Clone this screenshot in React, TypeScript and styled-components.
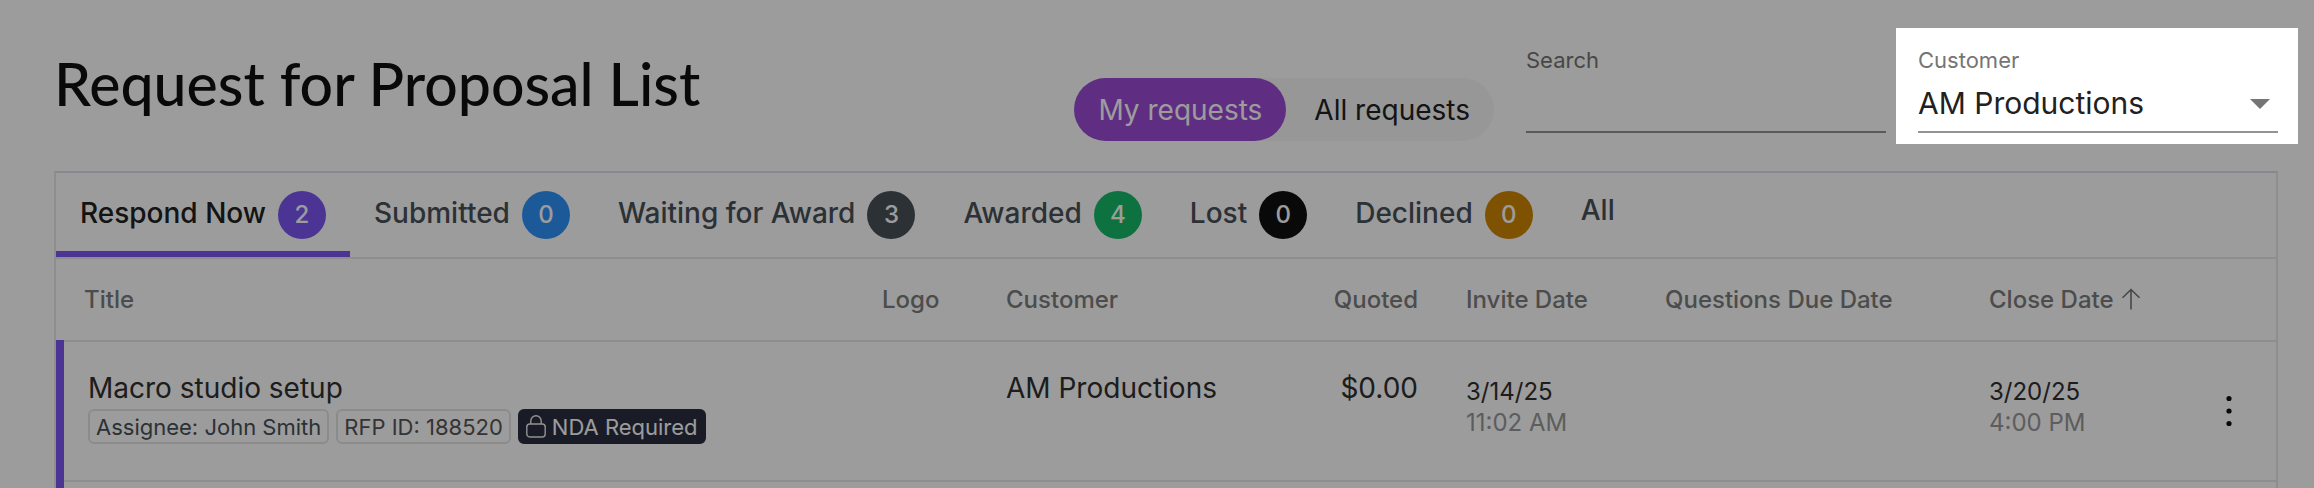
import React from "react";
import styled, { createGlobalStyle } from "styled-components";

const GlobalStyle = createGlobalStyle`
  *, *::before, *::after { box-sizing: border-box; }
  body {
    margin: 0;
    background: #ffffff;
    color: #212121;
    font-family: Inter, "Liberation Sans", sans-serif;
    font-size: 28px;
  }
  button, input, select { font: inherit; color: inherit; }
`;

const border = "#e8e8e8";
const violet = "#7c56f3";

const Page = styled.main`
  height: 100vh;
  overflow: hidden;
`;

const Header = styled.header`
  display: flex;
  align-items: flex-start;
  padding: 28px 16px 0 54px;
`;

const Heading = styled.h1`
  flex: 1;
  margin: 0;
  padding-top: 20px;
  color: #101010;
  font-family: Lato, "Liberation Sans", sans-serif;
  font-size: 59px;
  line-height: 72px;
  font-weight: 500;
  white-space: nowrap;
`;

const Toggle = styled.div`
  display: flex;
  gap: 4px;
  margin: 50px 32px 0 0;
  border-radius: 32px;
  background: #f7f7f7;
`;

const ToggleButton = styled.button<{ $active?: boolean }>`
  height: 63px;
  padding: 0 24px;
  border: 0;
  border-radius: 32px;
  background: ${(p) => (p.$active ? "#9b4bd5" : "transparent")};
  color: ${(p) => (p.$active ? "#ffffff" : "#212121")};
  white-space: nowrap;
  cursor: pointer;
`;

const Field = styled.div`
  display: flex;
  flex-direction: column;
  width: 360px;
  padding-top: 18px;
`;

const FieldLabel = styled.label`
  color: #757575;
  font-size: 22px;
  line-height: 28px;
`;

const TextInput = styled.input`
  width: 100%;
  height: 59px;
  padding: 0;
  border: 0;
  border-bottom: 2px solid #949494;
  border-radius: 0;
  background: transparent;
  font-size: 30px;
  outline: 0;
`;

/* The huge shadow spread dims everything around the highlighted field. */
const Spotlight = styled.div`
  position: relative;
  z-index: 1;
  margin-left: 10px;
  padding: 0 20px 11px 22px;
  background: #ffffff;
  box-shadow: 0 0 0 4000px rgba(0, 0, 0, 0.388);
`;

const SelectBox = styled.div`
  display: grid;
  align-items: center;
  > * { grid-area: 1 / 1; }
  > svg { justify-self: end; margin-right: 8px; pointer-events: none; }
`;

const Select = styled(TextInput).attrs({ as: "select" })`
  appearance: none;
`;

const Panel = styled.section`
  margin: 27px 36px 0 54px;
  border: 2px solid ${border};
  border-top-color: #dddde6;
`;

const Tabs = styled.div`
  display: flex;
  border-bottom: 2px solid ${border};
`;

const Tab = styled.button<{ $active?: boolean; $plain?: boolean }>`
  display: flex;
  align-items: flex-start;
  gap: 12px;
  height: 84px;
  padding: 18px 24px 0;
  border: 0;
  border-bottom: 6px solid ${(p) => (p.$active ? violet : "transparent")};
  background: transparent;
  color: ${(p) => (p.$active ? "#212121" : "#485057")};
  font-weight: 500;
  line-height: ${(p) => (p.$plain ? 38 : 44)}px;
  white-space: nowrap;
  cursor: pointer;
`;

const Badge = styled.span<{ $color: string }>`
  width: 48px;
  height: 48px;
  border-radius: 50%;
  background: ${(p) => p.$color};
  color: #ffffff;
  font-size: 24px;
  line-height: 48px;
  text-align: center;
`;

const Table = styled.table`
  width: 100%;
  table-layout: fixed;
  border-collapse: separate;
  border-spacing: 0;
`;

const Col = styled.col<{ $width?: number }>`
  width: ${(p) => (p.$width ? `${p.$width}px` : "auto")};
`;

const HeadCell = styled.th<{ $right?: boolean }>`
  height: 81px;
  padding: 0 24px;
  color: #7c7c7c;
  font-size: 24px;
  line-height: 32px;
  font-weight: 500;
  text-align: ${(p) => (p.$right ? "right" : "left")};
  white-space: nowrap;
  &:first-child { padding-left: 28px; }
  > svg { margin-left: 8px; vertical-align: -2px; }
`;

/* Row lines are inset shadows, so that the violet marker runs over them unbroken. */
const Cell = styled.td<{ $right?: boolean; $dates?: boolean }>`
  height: 140px;
  padding: ${(p) => (p.$dates ? 36 : 29)}px 24px 0;
  box-shadow: inset 0 2px 0 ${border};
  color: #303030;
  font-size: ${(p) => (p.$dates ? 24 : 28)}px;
  line-height: ${(p) => (p.$dates ? 31 : 38)}px;
  text-align: ${(p) => (p.$right ? "right" : "left")};
  vertical-align: top;
  white-space: nowrap;
  &:first-child {
    padding-left: 32px;
    box-shadow: inset 8px 0 0 ${violet}, inset 0 2px 0 ${border};
  }
`;

const Time = styled.div`
  color: #999999;
`;

const Chips = styled.div`
  display: flex;
  gap: 7px;
  margin-top: 2px;
`;

const Chip = styled.span<{ $dark?: boolean; $neutral?: boolean }>`
  display: flex;
  align-items: center;
  gap: 6px;
  height: 35px;
  padding: 0 6px;
  border: 2px solid ${(p) => (p.$dark ? "#2a2e41" : "#e4e4e4")};
  border-radius: 6px;
  background: ${(p) => (p.$dark ? "#2a2e41" : "transparent")};
  color: ${(p) => (p.$dark ? "#ffffff" : p.$neutral ? "#555555" : "#485057")};
  font-size: 22px;
  line-height: 30px;
`;

const MenuButton = styled.button`
  display: block;
  margin: 0 auto;
  padding: 26px 16px;
  border: 0;
  background: transparent;
  line-height: 0;
  cursor: pointer;
`;

const tabs = [
  { label: "Respond Now", count: 2, color: violet },
  { label: "Submitted", count: 0, color: "#2f92fa" },
  { label: "Waiting for Award", count: 3, color: "#485057" },
  { label: "Awarded", count: 4, color: "#17ba69" },
  { label: "Lost", count: 0, color: "#101010" },
  { label: "Declined", count: 0, color: "#ce8600" },
  { label: "All" },
];

const columnWidths = [undefined, 124, 260, 200, 199, 324, 217, 94];

const CaretIcon = () => (
  <svg width="20" height="10" viewBox="0 0 20 10" aria-hidden="true">
    <path d="M0 0h20L10 10z" fill="#757575" />
  </svg>
);

const ArrowUpIcon = () => (
  <svg width="20" height="22" viewBox="0 0 20 22" fill="none" stroke="#757575" strokeWidth="1.6" aria-hidden="true">
    <path d="M9 21.500V1.500M0.500 9.800L9 1.500l8.500 8.300" />
  </svg>
);

const LockIcon = () => (
  <svg width="20" height="24" viewBox="0 0 20 24" fill="none" stroke="#f0f0f0" strokeWidth="1.4" aria-hidden="true">
    <rect x="0.800" y="9" width="18.400" height="13" rx="3" />
    <path d="M4.800 9V6a5.200 5.200 0 0 1 10.400 0v3" />
  </svg>
);

const DotsIcon = () => (
  <svg width="8" height="32" viewBox="0 0 8 32" fill="#101010" aria-hidden="true">
    <circle cx="4" cy="3.500" r="2.600" />
    <circle cx="4" cy="16" r="2.600" />
    <circle cx="4" cy="28.500" r="2.600" />
  </svg>
);

export default function App() {
  return (
    <Page>
      <GlobalStyle />
      <Header>
        <Heading>Request for Proposal List</Heading>
        <Toggle role="group" aria-label="Request scope">
          <ToggleButton type="button" $active aria-pressed="true">My requests</ToggleButton>
          <ToggleButton type="button" aria-pressed="false">All requests</ToggleButton>
        </Toggle>
        <Field>
          <FieldLabel htmlFor="search">Search</FieldLabel>
          <TextInput id="search" type="text" />
        </Field>
        <Spotlight>
          <Field>
            <FieldLabel htmlFor="customer">Customer</FieldLabel>
            <SelectBox>
              <Select id="customer">
                <option>AM Productions</option>
              </Select>
              <CaretIcon />
            </SelectBox>
          </Field>
        </Spotlight>
      </Header>
      <Panel>
        <Tabs role="tablist">
          {tabs.map((tab, i) => (
            <Tab key={tab.label} type="button" role="tab" aria-selected={i === 0} $active={i === 0} $plain={!tab.color}>
              {tab.label}
              {tab.color && <Badge $color={tab.color}>{tab.count}</Badge>}
            </Tab>
          ))}
        </Tabs>
        <Table>
          <colgroup>
            {columnWidths.map((width, i) => <Col key={i} $width={width} />)}
          </colgroup>
          <thead>
            <tr>
              <HeadCell>Title</HeadCell>
              <HeadCell>Logo</HeadCell>
              <HeadCell>Customer</HeadCell>
              <HeadCell $right>Quoted</HeadCell>
              <HeadCell>Invite Date</HeadCell>
              <HeadCell>Questions Due Date</HeadCell>
              <HeadCell aria-sort="ascending">Close Date<ArrowUpIcon /></HeadCell>
              <HeadCell />
            </tr>
          </thead>
          <tbody>
            <tr>
              <Cell>
                Macro studio setup
                <Chips>
                  <Chip>Assignee: John Smith</Chip>
                  <Chip $neutral>RFP ID: 188520</Chip>
                  <Chip $dark><LockIcon />NDA Required</Chip>
                </Chips>
              </Cell>
              <Cell />
              <Cell>AM Productions</Cell>
              <Cell $right>$0.00</Cell>
              <Cell $dates>3/14/25<Time>11:02 AM</Time></Cell>
              <Cell />
              <Cell $dates>3/20/25<Time>4:00 PM</Time></Cell>
              <Cell>
                <MenuButton type="button" aria-label="Row actions"><DotsIcon /></MenuButton>
              </Cell>
            </tr>
            <tr>
              {columnWidths.map((_, i) => <Cell key={i} />)}
            </tr>
          </tbody>
        </Table>
      </Panel>
    </Page>
  );
}
